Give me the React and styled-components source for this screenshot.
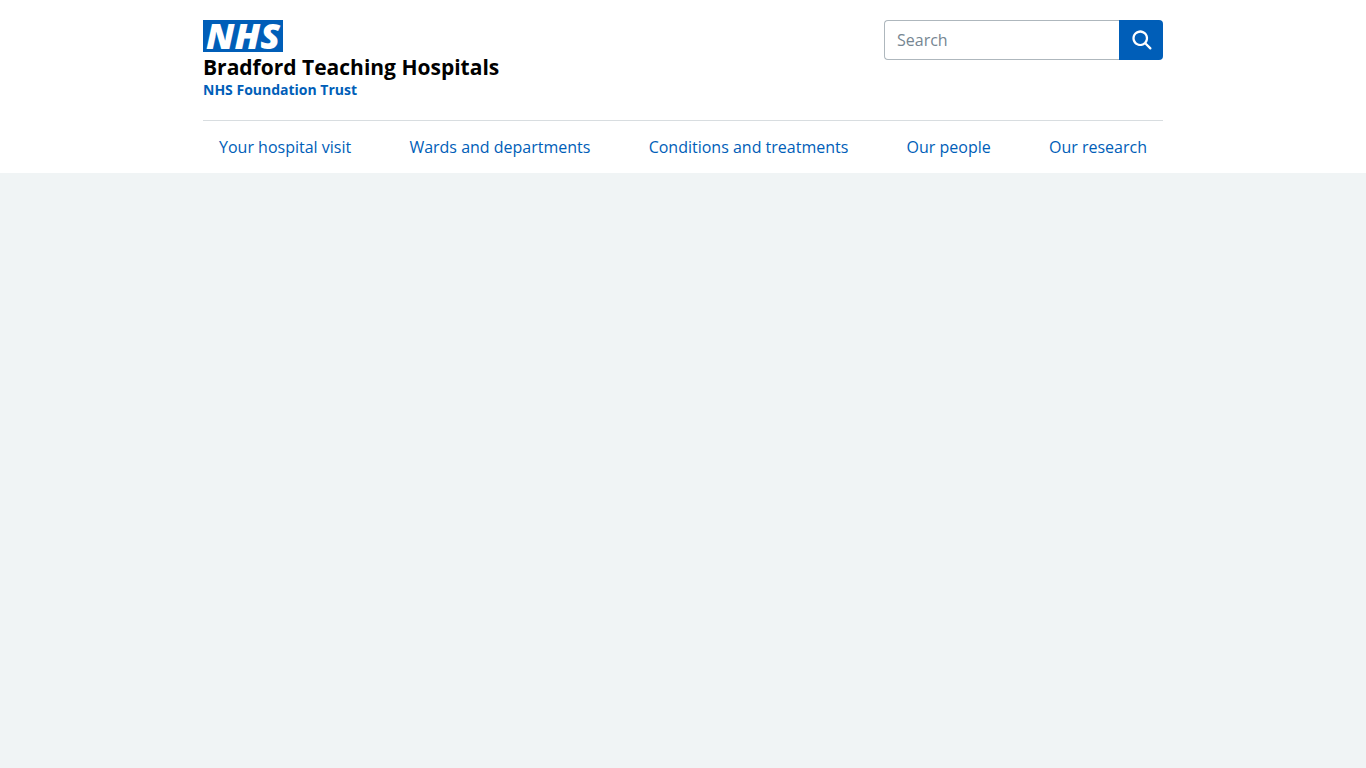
import React from "react";
import styled, { createGlobalStyle } from "styled-components";

const GlobalStyle = createGlobalStyle`
  *, *::before, *::after { box-sizing: border-box; }
  body {
    margin: 0;
    background: #f0f4f5;
    color: #212b32;
    font-family: "Open Sans", Arial, sans-serif;
    font-size: 16px;
    line-height: 24px;
  }
`;

const Header = styled.header`
  background: #fff;
`;

const Container = styled.div`
  max-width: 960px;
  margin: 0 auto;
`;

const TopRow = styled.div`
  display: flex;
  justify-content: space-between;
  align-items: flex-start;
  padding: 20px 0;
`;

const Brand = styled.a`
  display: block;
  color: #005eb8;
  text-decoration: none;
`;

const Logo = styled.span`
  display: flex;
  align-items: center;
  justify-content: center;
  width: 80px;
  height: 32px;
  background: #005eb8;
  color: #fff;
  font: italic 800 36px/32px "Open Sans", sans-serif;
`;

const TrustName = styled.span`
  display: block;
  color: #000;
  font: 700 21px/30px "Open Sans", sans-serif;
`;

const TrustType = styled.span`
  display: block;
  padding-bottom: 2px;
  font: 700 14px/16px "Open Sans", sans-serif;
`;

const SearchForm = styled.form`
  display: flex;
  height: 40px;
`;

const SearchInput = styled.input`
  width: 235px;
  padding: 0 12px;
  border: 1px solid #aeb7bd;
  border-right: 0;
  border-radius: 4px 0 0 4px;
  background: #fff;
  font: 400 16px/24px "Open Sans", sans-serif;
  &::placeholder { color: #768692; opacity: 1; }
`;

const SearchButton = styled.button`
  display: flex;
  align-items: center;
  justify-content: center;
  width: 44px;
  padding: 0 0 0 2px;
  border: 0;
  border-radius: 0 4px 4px 0;
  background: #005eb8;
`;

const NavList = styled.ul`
  display: flex;
  justify-content: space-between;
  margin: 0;
  padding: 0;
  border-top: 1px solid #d8dde0;
  list-style: none;
`;

const NavLink = styled.a`
  display: block;
  padding: 14px 16px;
  color: #005eb8;
  text-decoration: none;
`;

const links = [
  "Your hospital visit",
  "Wards and departments",
  "Conditions and treatments",
  "Our people",
  "Our research",
];

export default function App() {
  return (
    <>
      <GlobalStyle />
      <Header>
        <Container>
          <TopRow>
            <Brand href="#">
              <Logo>NHS</Logo>
              <TrustName>Bradford Teaching Hospitals</TrustName>
              <TrustType>NHS Foundation Trust</TrustType>
            </Brand>
            <SearchForm role="search">
              <SearchInput type="search" placeholder="Search" aria-label="Search" />
              <SearchButton type="submit" aria-label="Search">
                <svg width="27" height="27" viewBox="0 0 24 24" fill="#fff" aria-hidden="true">
                  <path d="M19.71 18.29l-4.11-4.1a7 7 0 1 0-1.41 1.41l4.1 4.11a1 1 0 0 0 1.42 0 1 1 0 0 0 0-1.42zM5 10a5 5 0 1 1 5 5 5 5 0 0 1-5-5z" />
                </svg>
              </SearchButton>
            </SearchForm>
          </TopRow>
          <nav aria-label="Primary">
            <NavList>
              {links.map((text) => (
                <li key={text}>
                  <NavLink href="#">{text}</NavLink>
                </li>
              ))}
            </NavList>
          </nav>
        </Container>
      </Header>
    </>
  );
}
